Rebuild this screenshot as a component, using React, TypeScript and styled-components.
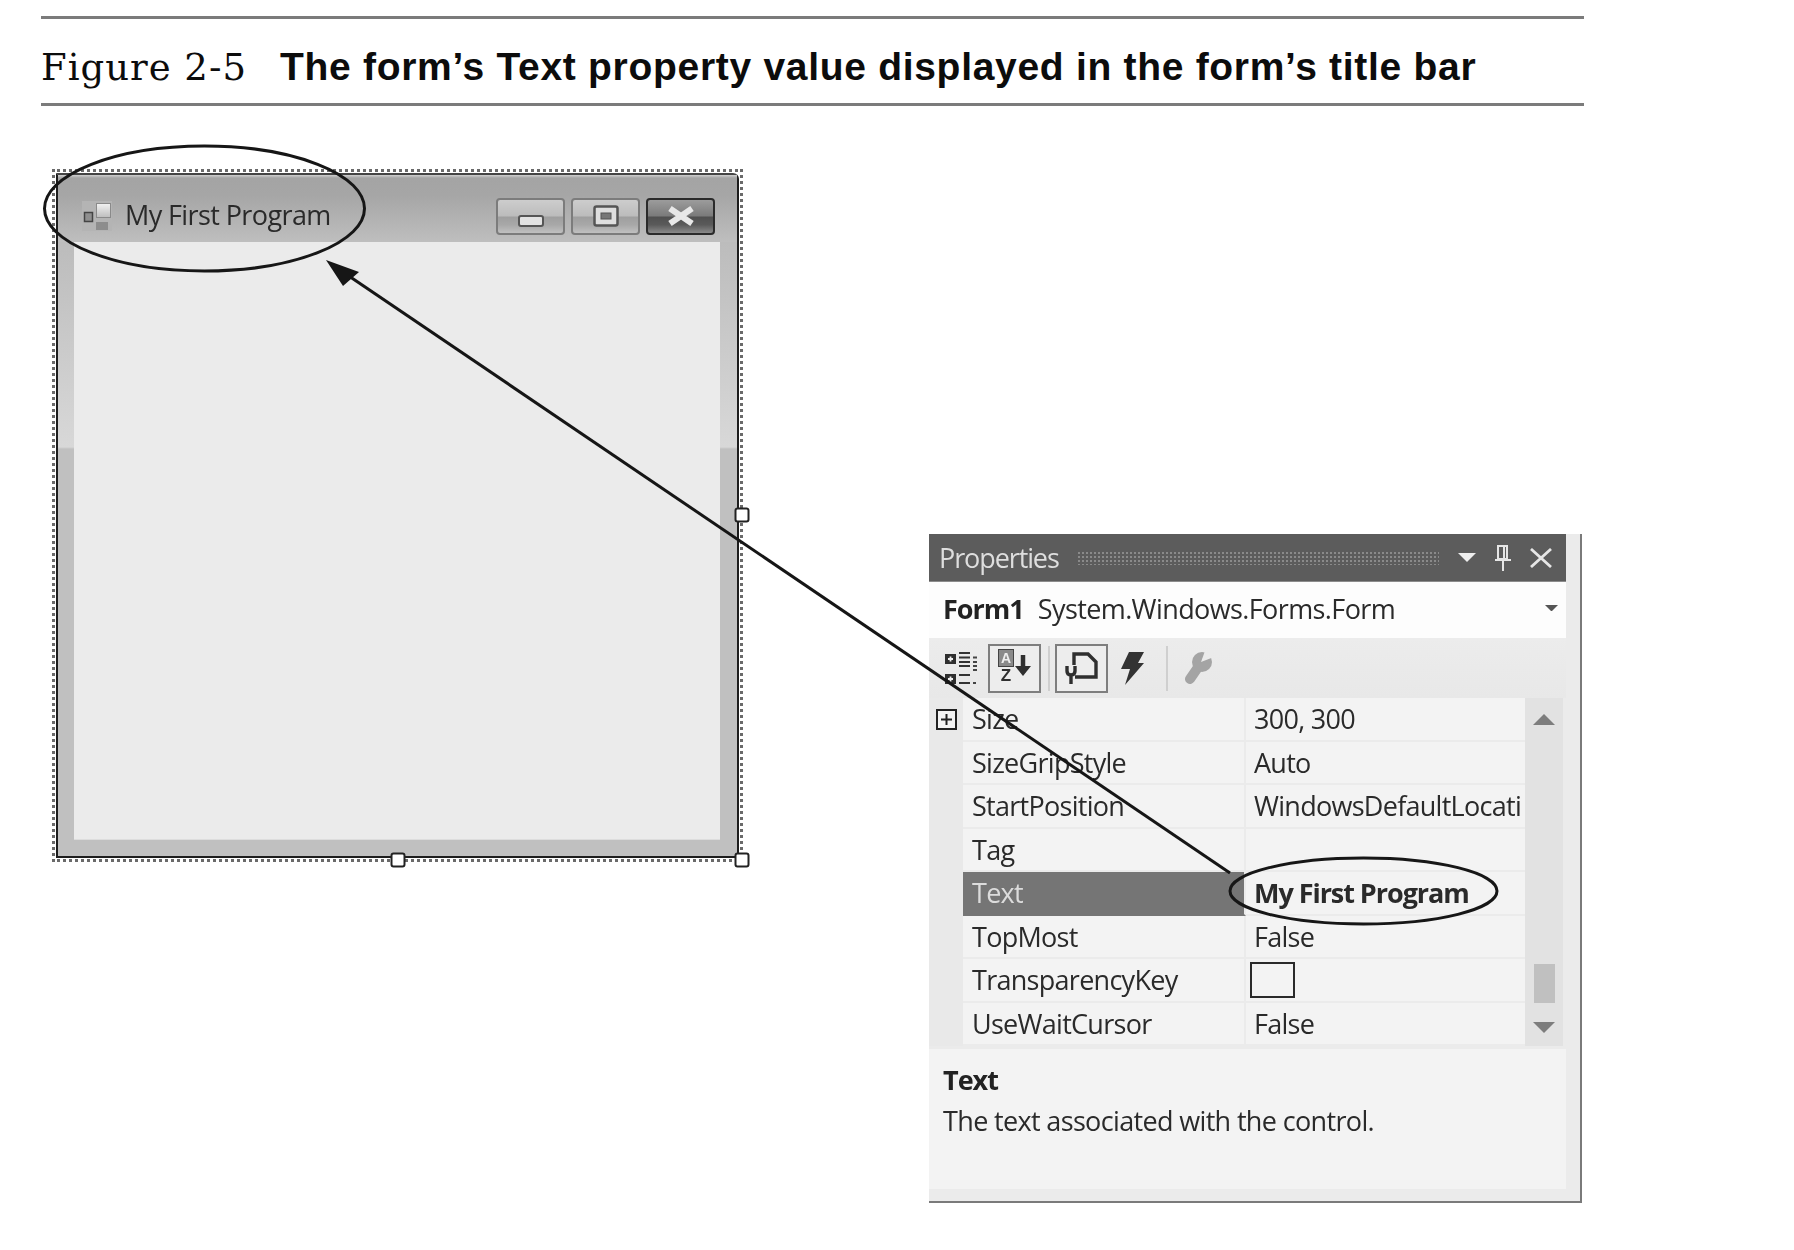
import React from 'react';
import styled, { createGlobalStyle } from 'styled-components';

const GlobalStyle = createGlobalStyle`
  html, body {
    margin: 0;
    padding: 0;
    background: #ffffff;
  }
`;

const uiFont = `"Open Sans", "Noto Sans", sans-serif`;

const Page = styled.div`
  position: relative;
  box-sizing: border-box;
  width: 1794px;
  height: 1250px;
  padding: 16px 0 0 41px;
  background: #ffffff;
`;

const Rule = styled.div`
  width: 1543px;
  height: 3px;
  background: #7b7b7b;
`;

const Caption = styled.div`
  display: flex;
  align-items: baseline;
  height: 84px;
  box-sizing: border-box;
  padding-top: 26px;
  color: #0c0c0c;
`;

const FigureLabel = styled.span`
  font-family: "DejaVu Serif", serif;
  font-size: 37px;
  letter-spacing: 1px;
  line-height: 44px;
  width: 239px;
`;

const FigureTitle = styled.span`
  font-family: "Liberation Sans", Arial, sans-serif;
  font-weight: 700;
  font-size: 39px;
  letter-spacing: 0.7px;
  line-height: 44px;
  white-space: nowrap;
`;

const Figure = styled.div`
  display: flex;
  align-items: flex-start;
  padding-top: 63px;
`;

/* ---------- form designer ---------- */

const SelectionFrame = styled.div`
  position: relative;
  box-sizing: border-box;
  width: 691px;
  height: 693px;
  margin-left: 11px;
  padding: 1px;
  border: 3px dotted #6a6a6a;
  flex-shrink: 0;
`;

const FormWindow = styled.div`
  box-sizing: border-box;
  height: 100%;
  display: flex;
  flex-direction: column;
  border: 2px solid #1d1d1d;
  border-top-color: #444444;
  border-top-right-radius: 6px;
  background: #c0c0c0;
  filter: blur(0.55px);
`;

const FormTitleBar = styled.div`
  display: flex;
  align-items: center;
  box-sizing: border-box;
  height: 67px;
  padding: 15px 22px 0 24px;
  background: linear-gradient(to bottom, #cfcfcf 0, #a4a4a4 3px, #a6a6a6 20px, #bebebe 100%);
`;

const FormTitle = styled.span`
  flex: 1;
  margin: 0 0 4px 13px;
  font-family: ${uiFont};
  font-size: 27px;
  letter-spacing: -0.6px;
  color: #2a2a2a;
`;

const CaptionButtons = styled.div`
  display: flex;
  gap: 6px;
`;

const CaptionButton = styled.div<{ $close?: boolean }>`
  box-sizing: border-box;
  width: 69px;
  height: 37px;
  display: flex;
  align-items: center;
  justify-content: center;
  border: 2px solid ${p => (p.$close ? '#2b2b2b' : '#7c7c7c')};
  border-radius: 4px;
  background: ${p =>
    p.$close
      ? 'linear-gradient(to bottom, #9c9c9c 0, #7b7b7b 48%, #505050 52%, #5a5a5a 75%, #8a8a8a 100%)'
      : 'linear-gradient(to bottom, #cdcdcd 0, #bcbcbc 48%, #9f9f9f 52%, #a8a8a8 75%, #c0c0c0 100%)'};
`;

const FormBody = styled.div`
  flex: 1;
  display: flex;
`;

const SideStrip = styled.div<{ $width: number }>`
  width: ${p => p.$width}px;
  background: linear-gradient(to bottom, #bcbcbc 0, #d8d8d8 205px, #c0c0c0 207px);
`;

const ClientArea = styled.div`
  flex: 1;
  background: #ebebeb;
  box-shadow: 0 1px 0 #dddddd;
`;

const FormBottom = styled.div`
  height: 17px;
`;

const Handle = styled.div<{ $x: number; $y: number }>`
  position: absolute;
  left: ${p => p.$x}px;
  top: ${p => p.$y}px;
  box-sizing: border-box;
  width: 15px;
  height: 15px;
  transform: translate(-50%, -50%);
  border: 2px solid #222222;
  border-radius: 3px;
  background: #ffffff;
`;

/* ---------- properties panel ---------- */

const Panel = styled.div`
  box-sizing: border-box;
  width: 653px;
  height: 669px;
  margin: 365px 0 0 186px;
  padding: 0 14px 12px 0;
  display: flex;
  flex-direction: column;
  flex-shrink: 0;
  background: #ebebeb;
  border-right: 2px solid #7a7a7a;
  border-bottom: 2px solid #7a7a7a;
  font-family: ${uiFont};
  filter: blur(0.5px);
`;

const PanelTitleBar = styled.div`
  display: flex;
  align-items: center;
  height: 48px;
  box-sizing: border-box;
  padding: 0 14px 0 10px;
  background: #5c5c5c;
  border-bottom: 1px solid #8c8c8c;
`;

const PanelTitle = styled.span`
  font-size: 27px;
  letter-spacing: -1.1px;
  color: #dedede;
`;

const Grip = styled.div`
  width: 362px;
  height: 14px;
  margin: 0 19px 0 18px;
  background-image: radial-gradient(circle, #8a8a8a 1px, transparent 1.2px);
  background-size: 4px 4px;
`;

const PanelControls = styled.div`
  display: flex;
  align-items: center;
  gap: 18px;
`;

const ObjectRow = styled.div`
  display: flex;
  align-items: center;
  gap: 14px;
  box-sizing: border-box;
  height: 56px;
  padding: 0 8px 4px 14px;
  background: #fdfdfd;
  font-size: 27px;
  letter-spacing: -0.6px;
  color: #2a2a2a;
`;

const ObjectName = styled.b`
  font-weight: 700;
  letter-spacing: -1px;
  color: #222222;
`;

const ObjectType = styled.span`
  flex: 1;
`;

const Toolbar = styled.div`
  display: flex;
  align-items: center;
  height: 60px;
  padding-left: 16px;
  background: linear-gradient(to bottom, #ececec, #e8e8e8);
`;

const ToolButton = styled.div<{ $gap: number }>`
  box-sizing: border-box;
  width: 53px;
  height: 49px;
  margin-left: ${p => p.$gap}px;
  display: flex;
  align-items: center;
  justify-content: center;
  border: 2px solid #7e7e7e;
  background: #ededed;
`;

const ToolIcon = styled.div<{ $gap: number }>`
  margin-left: ${p => p.$gap}px;
  display: flex;
`;

const ToolSeparator = styled.div<{ $gap: number }>`
  width: 2px;
  height: 45px;
  margin-left: ${p => p.$gap}px;
  background: #cfcfcf;
`;

const PropertyGrid = styled.div`
  display: flex;
  height: 348px;
`;

const PropertyRows = styled.div`
  display: grid;
  grid-template-rows: repeat(8, 1fr);
  width: 596px;
`;

const PropertyRow = styled.div`
  display: grid;
  grid-template-columns: 34px 283px 279px;
`;

const Gutter = styled.div`
  display: flex;
  align-items: center;
  justify-content: center;
  background: #e9e9e9;
`;

const Cell = styled.div<{ $selected?: boolean; $name?: boolean; $bold?: boolean }>`
  display: flex;
  align-items: center;
  box-sizing: border-box;
  padding-left: ${p => (p.$name ? 9 : 8)}px;
  overflow: hidden;
  white-space: nowrap;
  font-size: 27px;
  letter-spacing: ${p => (p.$bold ? -1.05 : -0.72)}px;
  font-weight: ${p => (p.$bold ? 700 : 400)};
  color: ${p => (p.$selected ? '#dcdcdc' : '#2a2a2a')};
  background: ${p => (p.$selected ? '#757575' : '#f3f3f3')};
  border-bottom: 2px solid ${p => (p.$selected ? '#757575' : '#ebebeb')};
  border-right: ${p => (p.$name ? '2px solid #ebebeb' : '0')};
`;

const Swatch = styled.div`
  box-sizing: border-box;
  width: 45px;
  height: 36px;
  margin-left: -4px;
  border: 2px solid #2a2a2a;
  background: #f3f3f3;
`;

const ScrollTrack = styled.div`
  width: 38px;
  display: flex;
  flex-direction: column;
  align-items: center;
  padding: 16px 0 13px;
  box-sizing: border-box;
  background: #e2e2e2;
`;

const ScrollThumb = styled.div`
  width: 21px;
  height: 39px;
  margin: auto 0 19px;
  background: #c0c0c0;
`;

const ScrollArrow = styled.div<{ $down?: boolean }>`
  width: 0;
  height: 0;
  border-left: 11px solid transparent;
  border-right: 11px solid transparent;
  border-${p => (p.$down ? 'top' : 'bottom')}: 11px solid #7d7d7d;
`;

const Description = styled.div`
  height: 140px;
  margin-top: 3px;
  box-sizing: border-box;
  padding: 10px 14px 0;
  background: #f3f3f3;
  color: #2a2a2a;
  font-size: 27px;
  letter-spacing: -0.65px;
  line-height: 41px;
`;

const DescriptionTitle = styled.div`
  font-weight: 700;
  letter-spacing: -1px;
  color: #222222;
`;

/* ---------- annotations drawn over the figure ---------- */

const Annotations = styled.svg`
  position: absolute;
  left: 0;
  top: 0;
  pointer-events: none;
`;

const properties = [
  { name: 'Size', value: '300, 300', expandable: true },
  { name: 'SizeGripStyle', value: 'Auto' },
  { name: 'StartPosition', value: 'WindowsDefaultLocati' },
  { name: 'Tag', value: '' },
  { name: 'Text', value: 'My First Program', selected: true },
  { name: 'TopMost', value: 'False' },
  { name: 'TransparencyKey', value: '', swatch: true },
  { name: 'UseWaitCursor', value: 'False' },
];

const FormIcon = () => (
  <svg width="30" height="30" viewBox="0 0 30 30">
    <defs>
      <linearGradient id="formIconFill" x1="0" y1="0" x2="0" y2="1">
        <stop offset="0" stopColor="#f2f2f2" />
        <stop offset="1" stopColor="#bdbdbd" />
      </linearGradient>
    </defs>
    <rect x="0" y="0" width="30" height="30" fill="#b4b4b4" />
    <rect x="14.5" y="2.5" width="14" height="14" fill="url(#formIconFill)" stroke="#8a8a8a" />
    <rect x="2.5" y="11.5" width="8" height="9" fill="#8f8f8f" stroke="#444" strokeWidth="1.5" />
    <rect x="14" y="21" width="12" height="8" fill="#8d8d8d" />
  </svg>
);

const MinimizeGlyph = () => (
  <svg width="26" height="12" viewBox="0 0 26 12" style={{ marginTop: 10 }}>
    <rect x="1" y="1" width="24" height="10" rx="2" fill="#e2e2e2" stroke="#555" strokeWidth="2" />
  </svg>
);

const RestoreGlyph = () => (
  <svg width="26" height="22" viewBox="0 0 26 22">
    <rect x="1.5" y="1.5" width="23" height="19" rx="2" fill="#dedede" stroke="#555" strokeWidth="2.5" />
    <rect x="8" y="8" width="10" height="6" fill="#777" stroke="#555" />
  </svg>
);

const CloseGlyph = () => (
  <svg width="28" height="20" viewBox="0 0 28 20">
    <path d="M3 2.5 L25 17.5 M25 2.5 L3 17.5" stroke="#e8e8e8" strokeWidth="6" />
  </svg>
);

const DropArrow = ({ size, color }: { size: number; color: string }) => (
  <svg width={size} height={size / 2} viewBox="0 0 18 9">
    <path d="M0 0 H18 L9 9 Z" fill={color} />
  </svg>
);

const PinIcon = () => (
  <svg width="18" height="26" viewBox="0 0 18 26">
    <path d="M4 1 H13 V14 H4 Z M10 1 V14 M1 15 H17 M9 15 V26" fill="none" stroke="#e6e6e6" strokeWidth="2" />
  </svg>
);

const CloseIcon = () => (
  <svg width="22" height="20" viewBox="0 0 22 20">
    <path d="M1 1 L21 19 M21 1 L1 19" stroke="#e6e6e6" strokeWidth="2.8" />
  </svg>
);

const CategorizedIcon = () => (
  <svg width="32" height="33" viewBox="0 0 32 33">
    <rect x="0" y="2" width="11" height="10" fill="#2f2f2f" />
    <rect x="0" y="22" width="11" height="10" fill="#2f2f2f" />
    <path d="M3 7 H8 M5.5 4.5 V9.5 M3 27 H8 M5.5 24.5 V29.5" stroke="#eeeeee" strokeWidth="1.8" />
    <path d="M14 1 H25 M14 5.5 H25 M14 10 H25 M14 14 H25 M14 23 H25 M14 31 H25" stroke="#333333" strokeWidth="2.2" />
    <path d="M28 5.5 H32 M28 10 H32 M28 14 H32 M28 18 H32 M28 31 H31" stroke="#444444" strokeWidth="2.2" />
  </svg>
);

const SortIcon = () => (
  <svg width="33" height="38" viewBox="0 0 33 38">
    <rect x="0.5" y="0.5" width="15" height="17" fill="#8a8a8a" stroke="#444444" />
    <text x="8" y="14" textAnchor="middle" fontFamily="Liberation Sans" fontWeight="700" fontSize="14" fill="#eeeeee">
      A
    </text>
    <text x="8" y="32" textAnchor="middle" fontFamily="Liberation Sans" fontWeight="700" fontSize="17" fill="#2f2f2f">
      Z
    </text>
    <path d="M25 6 V24" stroke="#2f2f2f" strokeWidth="4.5" />
    <path d="M17 17 H33 L25 27 Z" fill="#2f2f2f" />
  </svg>
);

const PropertyPageIcon = () => (
  <svg width="33" height="32" viewBox="0 0 33 32">
    <path d="M9 13 V2 H23 L31 10 V25 H10" fill="none" stroke="#2f2f2f" strokeWidth="3.4" />
    <path d="M2 14 V19 Q2 23 6 23 Q10 23 10 19 V14 M6 23 V32" fill="none" stroke="#2f2f2f" strokeWidth="3.4" />
  </svg>
);

const BoltIcon = () => (
  <svg width="24" height="33" viewBox="0 0 24 33">
    <path d="M8 0 H23 L17 11 H23 L4 33 L9 17 H0 Z" fill="#333333" />
  </svg>
);

const WrenchIcon = () => (
  <svg width="28" height="33" viewBox="0 0 28 33">
    <path d="M6 27 L17 11" stroke="#a4a4a4" strokeWidth="10" strokeLinecap="round" />
    <circle cx="18" cy="10" r="10" fill="#a4a4a4" />
    <path d="M17 10 L21 -1 L30 5 Z" fill="#ebebeb" />
  </svg>
);

const ExpandBox = () => (
  <svg width="21" height="21" viewBox="0 0 21 21">
    <rect x="1" y="1" width="19" height="19" fill="#f4f4f4" stroke="#222222" strokeWidth="2" />
    <path d="M5 10.5 H16 M10.5 5 V16" stroke="#222222" strokeWidth="2" />
  </svg>
);

export default function App() {
  return (
    <Page>
      <GlobalStyle />
      <Rule />
      <Caption>
        <FigureLabel>Figure 2-5</FigureLabel>
        <FigureTitle>The form’s Text property value displayed in the form’s title bar</FigureTitle>
      </Caption>
      <Rule />

      <Figure>
        <SelectionFrame>
          <FormWindow>
            <FormTitleBar>
              <FormIcon />
              <FormTitle>My First Program</FormTitle>
              <CaptionButtons>
                <CaptionButton>
                  <MinimizeGlyph />
                </CaptionButton>
                <CaptionButton>
                  <RestoreGlyph />
                </CaptionButton>
                <CaptionButton $close>
                  <CloseGlyph />
                </CaptionButton>
              </CaptionButtons>
            </FormTitleBar>
            <FormBody>
              <SideStrip $width={16} />
              <ClientArea />
              <SideStrip $width={17} />
            </FormBody>
            <FormBottom />
          </FormWindow>
          <Handle $x={687} $y={343} />
          <Handle $x={343} $y={688} />
          <Handle $x={687} $y={688} />
        </SelectionFrame>

        <Panel>
          <PanelTitleBar>
            <PanelTitle>Properties</PanelTitle>
            <Grip />
            <PanelControls>
              <DropArrow size={18} color="#eeeeee" />
              <PinIcon />
              <CloseIcon />
            </PanelControls>
          </PanelTitleBar>

          <ObjectRow>
            <ObjectName>Form1</ObjectName>
            <ObjectType>System.Windows.Forms.Form</ObjectType>
            <DropArrow size={13} color="#555555" />
          </ObjectRow>

          <Toolbar>
            <CategorizedIcon />
            <ToolButton $gap={11}>
              <SortIcon />
            </ToolButton>
            <ToolSeparator $gap={7} />
            <ToolButton $gap={5}>
              <PropertyPageIcon />
            </ToolButton>
            <ToolIcon $gap={13}>
              <BoltIcon />
            </ToolIcon>
            <ToolSeparator $gap={21} />
            <ToolIcon $gap={16}>
              <WrenchIcon />
            </ToolIcon>
          </Toolbar>

          <PropertyGrid>
            <PropertyRows>
              {properties.map(row => (
                <PropertyRow key={row.name}>
                  <Gutter>{row.expandable && <ExpandBox />}</Gutter>
                  <Cell $name $selected={row.selected}>
                    {row.name}
                  </Cell>
                  <Cell $bold={row.selected}>{row.swatch ? <Swatch /> : row.value}</Cell>
                </PropertyRow>
              ))}
            </PropertyRows>
            <ScrollTrack>
              <ScrollArrow />
              <ScrollThumb />
              <ScrollArrow $down />
            </ScrollTrack>
          </PropertyGrid>

          <Description>
            <DescriptionTitle>Text</DescriptionTitle>
            The text associated with the control.
          </Description>
        </Panel>
      </Figure>

      <Annotations width="1794" height="1250" viewBox="0 0 1794 1250">
        <g fill="none" stroke="#161616" strokeWidth="3">
          <ellipse cx="204.5" cy="208.5" rx="160" ry="62.5" />
          <ellipse cx="1363.5" cy="891" rx="133.5" ry="33" />
          <path d="M340 270 L1230 873" />
        </g>
        <path d="M326 260 L343 286 L359 272 Z" fill="#161616" />
      </Annotations>
    </Page>
  );
}
